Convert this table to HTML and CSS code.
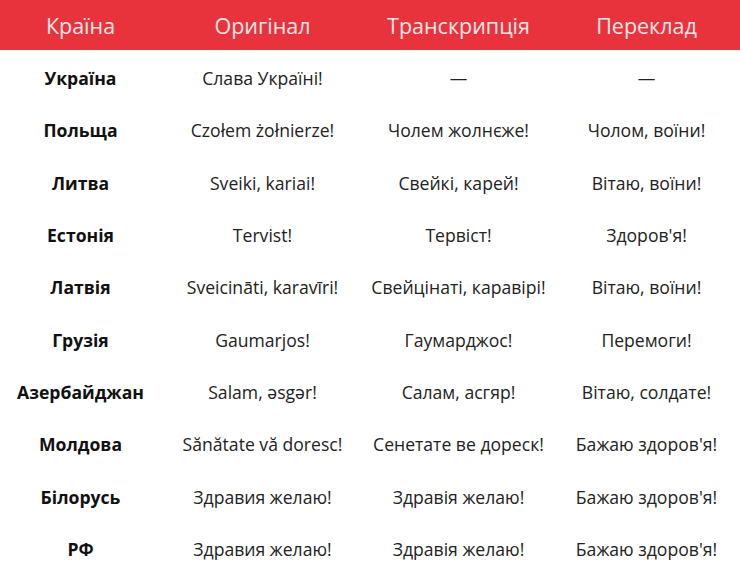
FILE: index.html
```html
<!DOCTYPE html>
<html lang="uk">
<head>
<meta charset="utf-8">
<link rel="stylesheet" href="styles.css">
</head>
<body>
<table class="greet">
  <colgroup>
    <col class="c1"><col class="c2"><col class="c3"><col class="c4">
  </colgroup>
  <thead>
    <tr><th>Країна</th><th>Оригінал</th><th>Транскрипція</th><th>Переклад</th></tr>
  </thead>
  <tbody>
    <tr><td class="country">Україна</td><td>Слава Україні!</td><td>—</td><td>—</td></tr>
    <tr><td class="country">Польща</td><td>Czołem żołnierze!</td><td>Чолем жолнєже!</td><td>Чолом, воїни!</td></tr>
    <tr><td class="country">Литва</td><td>Sveiki, kariai!</td><td>Свейкі, карей!</td><td>Вітаю, воїни!</td></tr>
    <tr><td class="country">Естонія</td><td>Tervist!</td><td>Тервіст!</td><td>Здоров'я!</td></tr>
    <tr><td class="country">Латвія</td><td>Sveicināti, karavīri!</td><td>Свейцінаті, каравірі!</td><td>Вітаю, воїни!</td></tr>
    <tr><td class="country">Грузія</td><td>Gaumarjos!</td><td>Гаумарджос!</td><td>Перемоги!</td></tr>
    <tr><td class="country">Азербайджан</td><td>Salam, əsgər!</td><td>Салам, асгяр!</td><td>Вітаю, солдате!</td></tr>
    <tr><td class="country">Молдова</td><td>Sănătate vă doresc!</td><td>Сенетате ве дореск!</td><td>Бажаю здоров'я!</td></tr>
    <tr><td class="country">Білорусь</td><td>Здравия желаю!</td><td>Здравія желаю!</td><td>Бажаю здоров'я!</td></tr>
    <tr><td class="country">РФ</td><td>Здравия желаю!</td><td>Здравія желаю!</td><td>Бажаю здоров'я!</td></tr>
  </tbody>
</table>
</body>
</html>
```
FILE: styles.css
```css
html, body {
  margin: 0;
  padding: 0;
  background: #ffffff;
}
body {
  font-family: "Open Sans", "Noto Sans", sans-serif;
  color: #222222;
}
.greet {
  width: 740px;
  table-layout: fixed;
  border-collapse: collapse;
  border-spacing: 0;
}
.c1 { width: 161px; }
.c2 { width: 203px; }
.c3 { width: 189px; }
.c4 { width: 187px; }
.greet th {
  background: #e8333c;
  color: #fbe9ea;
  font-weight: 400;
  font-size: 21.5px;
  height: 50px;
  padding: 0;
  text-align: center;
  vertical-align: middle;
  border-bottom: 2px solid #ffffff;
}
.greet td {
  height: 52.3px;
  padding: 0;
  font-size: 17.6px;
  text-align: center;
  vertical-align: middle;
  white-space: nowrap;
}
.greet td.country {
  font-weight: 700;
  color: #111111;
}
```
